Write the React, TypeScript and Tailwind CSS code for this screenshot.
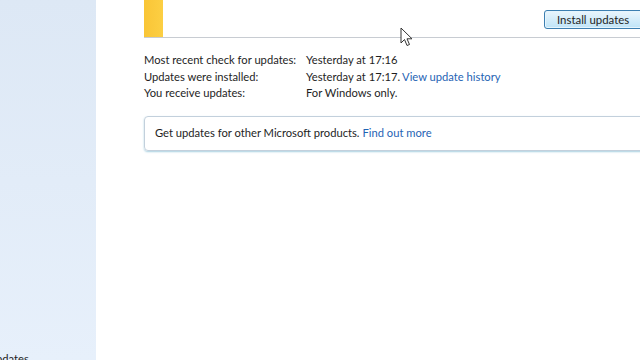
import React from "react";

export default function App() {
  const font = { fontFamily: 'Lato, "Noto Sans", sans-serif' };
  return (
    <div className="w-[640px] h-[360px] overflow-hidden flex bg-white text-[11.2px] text-[#1e1e1e]" style={font}>
      <div className="w-[96px] h-full bg-gradient-to-b from-[#dde8f5] to-[#e7f0fb] flex flex-col justify-end overflow-hidden">
        <div className="-ml-[12px] mb-[-7px] leading-[16px] whitespace-nowrap">Updates</div>
      </div>
      <div className="flex-1 relative pl-[48px]">
        <div className="h-[38px] flex border-b border-[#c8ccd2]">
          <div className="w-[19px] h-full bg-gradient-to-r from-[#f9c536] to-[#fccf43]" />
          <div className="flex-1 flex justify-end items-start pt-[10px]">
            <button className="h-[19px] w-[100px] -mr-[4px] rounded-[3px] border border-[#3c7fb1] bg-gradient-to-b from-[#eaf6fd] to-[#bfe4f7] shadow-[inset_0_0_0_1px_#e6f5fd] flex items-center pl-[12px] leading-none text-[11.4px] text-[#1e1e1e] whitespace-nowrap">
              Install updates
            </button>
          </div>
        </div>
        <div className="mt-[14px] grid grid-cols-[162px_1fr] leading-[16.5px] whitespace-nowrap">
          <div>Most recent check for updates:</div>
          <div>Yesterday at 17:16</div>
          <div>Updates were installed:</div>
          <div>
            Yesterday at 17:17.<span className="ml-[2px] text-[#1f64b4]">View update history</span>
          </div>
          <div>You receive updates:</div>
          <div>For Windows only.</div>
        </div>
        <div className="mt-[14px] h-[35px] -mr-[6px] rounded-[4px] border border-[#c3d0dc] shadow-[0_1px_2px_#a9d0e0] flex items-center pl-[10px] whitespace-nowrap">
          Get updates for other Microsoft products.<span className="ml-[3px] text-[#1f64b4]">Find out more</span>
        </div>
        <svg className="absolute left-[304px] top-[27px]" width="14" height="20" viewBox="0 0 14 20">
          <path d="M1 1 L1 16 L4.5 12.5 L7 18.5 L9.5 17.5 L7 11.8 L12 11.8 Z" fill="#fff" stroke="#333" strokeWidth="1" strokeLinejoin="round" />
        </svg>
      </div>
    </div>
  );
}
